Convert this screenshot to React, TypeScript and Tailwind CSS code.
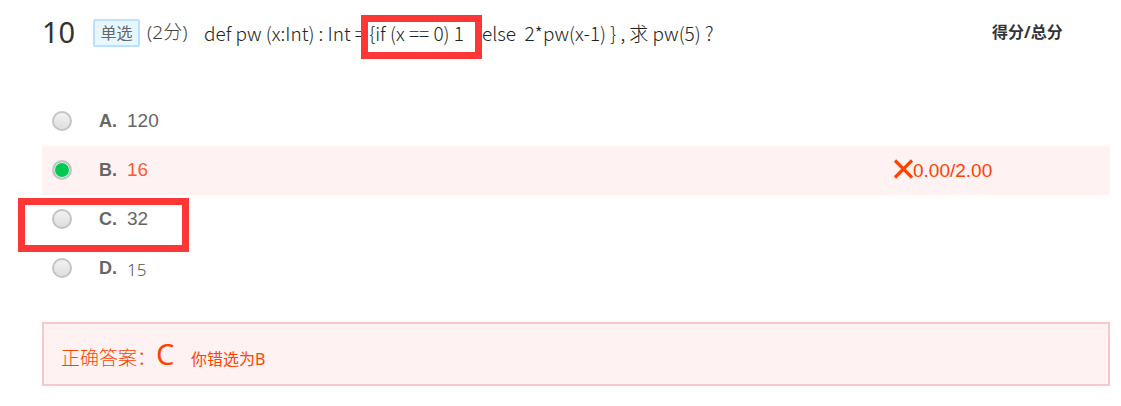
import { useState } from "react";

type Option = { key: string; text: string; light?: boolean; marked?: boolean };

const options: Option[] = [
  { key: "A", text: "120" },
  { key: "B", text: "16" },
  { key: "C", text: "32", marked: true },
  { key: "D", text: "15", light: true },
];

const submitted = "B";

function Highlight({ className }: { className: string }) {
  return (
    <span
      aria-hidden="true"
      className={`pointer-events-none absolute z-10 border-7 border-[#fd3636] ${className}`}
    />
  );
}

function CrossIcon() {
  return (
    <svg viewBox="0 0 20 20" className="-mt-1 size-5" aria-hidden="true">
      <path d="M2 1.5L19 18.5M19 1.5L2 18.5" fill="none" stroke="#ff4200" strokeWidth="3.2" />
    </svg>
  );
}

function OptionRow({
  option,
  selected,
  onSelect,
}: {
  option: Option;
  selected: boolean;
  onSelect: () => void;
}) {
  const wrong = option.key === submitted;
  const id = `option-${option.key}`;
  return (
    <li className={`relative flex h-[49px] items-center ${wrong ? "bg-[#fff2f2]" : ""}`}>
      {option.marked && <Highlight className="top-[3px] -left-6 h-[54px] w-[171px]" />}
      <input
        id={id}
        type="radio"
        name="answer"
        checked={selected}
        onChange={onSelect}
        className="-mt-px ml-2.5 size-5 shrink-0 appearance-none rounded-full border-2 border-[#c4c4c4] bg-linear-to-b from-[#f2f2f2] to-[#dedede] checked:bg-[#00c853] checked:bg-none checked:inset-ring-1 checked:inset-ring-[#f2f2f2]"
      />
      <label htmlFor={id} className="-mt-px ml-[27px] flex items-center">
        <span className="w-7 text-[18px] leading-6 font-bold text-[#666]">{option.key}.</span>
        <span
          className={`leading-6 ${
            wrong
              ? "text-[19px] text-[#ff5a30]"
              : option.light
                ? "pt-1 font-['Noto_Sans',sans-serif] text-[17px] font-light text-[#555]"
                : "text-[19px] text-[#666]"
          }`}
        >
          {option.text}
        </span>
      </label>
      {wrong && (
        <span className="ml-auto flex w-[217px] items-center text-[19px] leading-6 text-[#ff4200]">
          <CrossIcon />
          0.00/2.00
        </span>
      )}
    </li>
  );
}

export default function App() {
  const [answer, setAnswer] = useState(submitted);

  return (
    <main className="bg-white pr-[11px] pb-5 pl-[42px] font-['Liberation_Sans','Noto_Sans_CJK_SC',sans-serif]">
      <header className="flex h-[97px] items-start pt-4 font-['Noto_Sans','Noto_Sans_CJK_SC',sans-serif] whitespace-nowrap">
        <span className="w-[51px] text-[29px] leading-8 text-[#333]">10</span>
        <span className="mt-[3px] flex h-7 w-[47px] items-center justify-center rounded-xs border-2 border-[#bae0ff] bg-[#e6f7ff] text-[16px] leading-5 text-[#666]">
          单选
        </span>
        <span className="ml-[7px] w-[57px] text-[19px] leading-8 font-light text-[#444]">(2分)</span>
        <h1 className="flex pt-[3px] font-['Noto_Sans_CJK_SC',sans-serif] text-[19px] leading-7 font-light text-[#222]">
          <span className="whitespace-pre">def pw (x:Int) : Int = </span>
          <span className="relative whitespace-pre">
            <Highlight className="-top-1 -right-[18px] -left-2 h-11" />
            {"{if (x == 0) 1"}
          </span>
          <span className="ml-[18px] whitespace-pre">{"else  2*pw(x-1) } , 求 pw(5) ?"}</span>
        </h1>
        <strong className="ml-auto w-[118px] text-[16px] leading-8 font-bold text-[#333]">
          得分/总分
        </strong>
      </header>

      <ul>
        {options.map((option) => (
          <OptionRow
            key={option.key}
            option={option}
            selected={answer === option.key}
            onSelect={() => setAnswer(option.key)}
          />
        ))}
      </ul>

      <section className="mt-[29px] flex h-16 items-center border-2 border-[#f8c8c8] bg-[#fff2f2] px-[17px] font-['Noto_Sans','Noto_Sans_CJK_SC',sans-serif] text-[#ff4200]">
        <p className="flex items-baseline pt-1">
          <span className="w-[95px] text-[19px] leading-8 font-light">正确答案：</span>
          <span className="w-[35px] text-[29px] leading-8">C</span>
          <span className="text-[16px] leading-8">你错选为B</span>
        </p>
      </section>
    </main>
  );
}
